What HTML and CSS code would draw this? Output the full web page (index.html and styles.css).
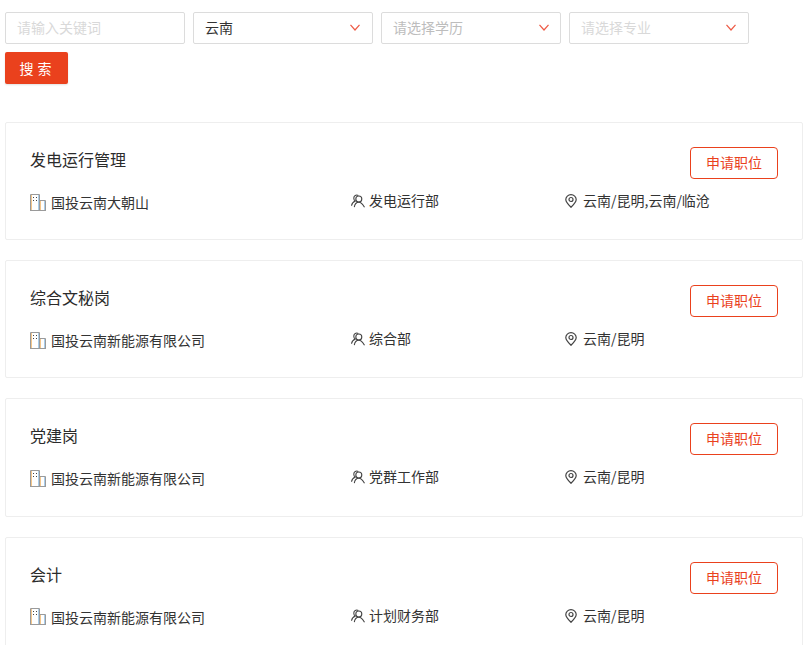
FILE: index.html
```html
<!DOCTYPE html>
<html lang="zh-CN">
<head>
<meta charset="utf-8">
<title>职位搜索</title>
<link rel="stylesheet" href="styles.css">
</head>
<body>
<svg class="sprites" width="0" height="0" aria-hidden="true">
  <symbol id="chev" viewBox="0 0 10 7"><path d="M.5.8 5 6 9.500.8" fill="none" stroke="#ee5a45" stroke-width="1.200"/></symbol>
  <symbol id="bld" viewBox="0 0 16 17"><path d="M.5 16.500V.5H9.500V16.500M9.500 6.500H15.500V16.500M0 16.500H16" fill="none" stroke="#9a9a9a"/><path d="M1.500 1V16M10.500 7V16" stroke="#f3c68a" fill="none"/><path d="M14.500 7V16M8.500 1V16" stroke="#a9cdea" fill="none"/><path d="M3 3.500h1M6 3.500h1M3 6.500h1M6 6.500h1" stroke="#444"/></symbol>
  <symbol id="ppl" viewBox="0 0 14 14"><g fill="none" stroke="#444" stroke-width="1.100"><path d="M7.300 1.500A3 3 0 0 0 2.800 4.200c0 1.200.5 2.200 1.500 2.800C2.200 7.800.8 9.600.5 11.800"/><circle cx="7.800" cy="5" r="3"/><path d="M3.300 13.200c.4-2.900 2.200-5 4.500-5s4.100 2.100 5.700 5"/></g></symbol>
  <symbol id="pin" viewBox="0 0 12 14"><g fill="none" stroke="#444" stroke-width="1.200"><path d="M6 13.300C3 10.500.8 8.300.8 5.600a5.200 5 0 0 1 10.400 0c0 2.700-2.200 4.900-5.200 7.700Z"/><circle cx="6" cy="5.500" r="2"/></g></symbol>
</svg>

<form class="filters">
  <div class="field"><span class="placeholder">请输入关键词</span></div>
  <div class="field"><span class="value">云南</span><svg class="chev"><use href="#chev"/></svg></div>
  <div class="field field-edu"><span class="placeholder">请选择学历</span><svg class="chev"><use href="#chev"/></svg></div>
  <div class="field"><span class="placeholder">请选择专业</span><svg class="chev"><use href="#chev"/></svg></div>
  <button class="search" type="button">搜 索</button>
</form>

<main class="jobs">
  <article class="job">
    <div class="job-head"><h3 class="job-title">发电运行管理</h3><button class="apply" type="button">申请职位</button></div>
    <div class="job-meta">
      <span class="company"><svg class="i-bld"><use href="#bld"/></svg><span class="company-name">国投云南大朝山</span></span>
      <span class="dept"><svg class="i-ppl"><use href="#ppl"/></svg>发电运行部</span>
      <span class="place"><svg class="i-pin"><use href="#pin"/></svg>云南/昆明,云南/临沧</span>
    </div>
  </article>
  <article class="job">
    <div class="job-head"><h3 class="job-title">综合文秘岗</h3><button class="apply" type="button">申请职位</button></div>
    <div class="job-meta">
      <span class="company"><svg class="i-bld"><use href="#bld"/></svg><span class="company-name">国投云南新能源有限公司</span></span>
      <span class="dept"><svg class="i-ppl"><use href="#ppl"/></svg>综合部</span>
      <span class="place"><svg class="i-pin"><use href="#pin"/></svg>云南/昆明</span>
    </div>
  </article>
  <article class="job">
    <div class="job-head"><h3 class="job-title">党建岗</h3><button class="apply" type="button">申请职位</button></div>
    <div class="job-meta">
      <span class="company"><svg class="i-bld"><use href="#bld"/></svg><span class="company-name">国投云南新能源有限公司</span></span>
      <span class="dept"><svg class="i-ppl"><use href="#ppl"/></svg>党群工作部</span>
      <span class="place"><svg class="i-pin"><use href="#pin"/></svg>云南/昆明</span>
    </div>
  </article>
  <article class="job">
    <div class="job-head"><h3 class="job-title">会计</h3><button class="apply" type="button">申请职位</button></div>
    <div class="job-meta">
      <span class="company"><svg class="i-bld"><use href="#bld"/></svg><span class="company-name">国投云南新能源有限公司</span></span>
      <span class="dept"><svg class="i-ppl"><use href="#ppl"/></svg>计划财务部</span>
      <span class="place"><svg class="i-pin"><use href="#pin"/></svg>云南/昆明</span>
    </div>
  </article>
</main>
</body>
</html>
```
FILE: styles.css
```css
* { box-sizing: border-box; }
html, body { height: 645px; overflow: hidden; }
body {
  margin: 0;
  padding: 12px 3px 0 5px;
  background: #fff;
  color: #333;
  font-family: "Noto Sans CJK SC", "Liberation Sans", sans-serif;
  font-size: 14px;
}
.sprites { position: absolute; }
.filters { display: flex; flex-wrap: wrap; gap: 8px; width: 760px; }
.field {
  width: 180px;
  height: 32px;
  border: 1px solid #dcdcdc;
  border-radius: 2px;
  padding: 0 12px 2px 11px;
  display: flex;
  align-items: center;
  justify-content: space-between;
}
.placeholder { color: #d9d9d9; }
.field-edu { padding-right: 11px; }
.field-edu .placeholder { color: #bdbdbd; }
.value { color: #333; }
.chev { width: 10px; height: 7px; margin-top: 1px; }
.search {
  width: 63px;
  height: 32px;
  border: 0;
  border-radius: 2px;
  background: #ea411d;
  color: #fff;
  font: inherit;
  word-spacing: 1px;
  padding: 0 2px 1px 0;
  box-shadow: 0 1px 2px rgba(0,0,0,.12);
  flex-basis: 63px;
}
.filters::after { content: ""; flex: 1 0 600px; }
.jobs { margin-top: 38px; display: flex; flex-direction: column; gap: 20px; }
.job {
  height: 118.2px;
  flex: none;
  border: 1px solid #eeeeee;
  border-radius: 2px;
  padding: 24px 24px 0;
}
.job-head { display: flex; justify-content: space-between; align-items: flex-start; height: 41px; }
.job-title { margin: -1px 0 0; font-size: 16px; font-weight: 400; line-height: 26px; color: #2b2b2b; }
.apply {
  width: 88px;
  height: 32px;
  background: #fff;
  border: 1px solid #ea411d;
  border-radius: 4px;
  color: #ea411d;
  font: inherit;
  font-size: 14px;
  padding: 0 0 2px;
}
.job-meta { display: flex; align-items: center; line-height: 20px; }
.company, .dept, .place { display: flex; align-items: center; }
.company { width: 321px; padding-top: 4px; }
.dept { width: 214px; }
.i-bld { width: 16px; height: 17px; margin-right: 5px; flex: none; }
.i-ppl { width: 14px; height: 14px; margin: 2px 4px 0 0; flex: none; }
.i-pin { width: 12px; height: 14px; margin: 2px 6px 0 0; flex: none; }
```
